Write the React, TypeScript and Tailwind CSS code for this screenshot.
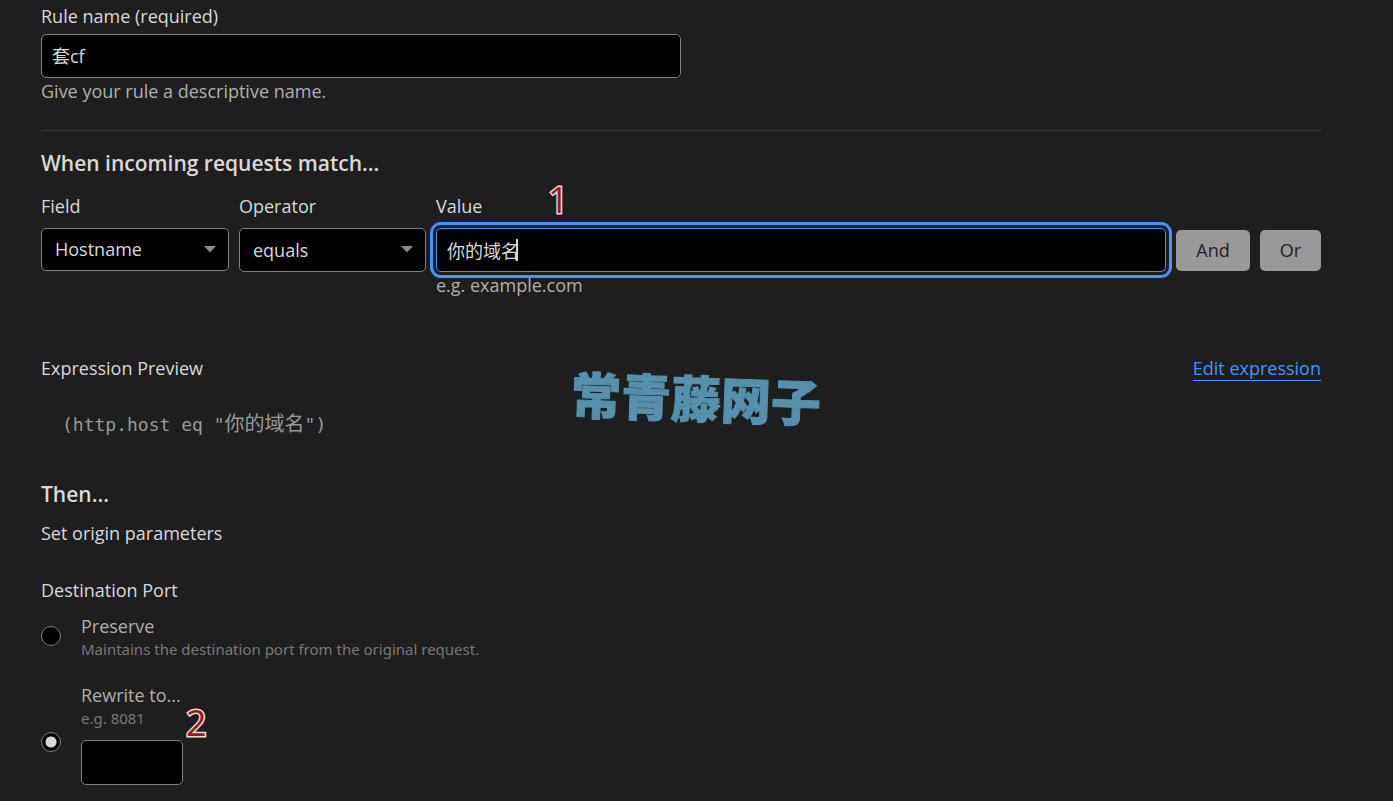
import type { ReactNode } from "react";

function Caret({ className }: { className: string }) {
    return (
        <svg
            className={`pointer-events-none absolute top-[18px] h-[7px] w-3 text-[#8c8c8c] ${className}`}
            viewBox="0 0 12 7"
            aria-hidden="true"
        >
            <path d="M0 0h12L6 6.5z" fill="currentColor" />
        </svg>
    );
}

type SelectFieldProps = {
    id: string;
    label: string;
    options: string[];
    width: string;
    className: string;
};

function SelectField({ id, label, options, width, className }: SelectFieldProps) {
    return (
        <div className={`shrink-0 ${width}`}>
            <label htmlFor={id} className="block leading-6">
                {label}
            </label>
            <div className="relative mt-[10px]">
                <select
                    id={id}
                    className={`block w-full appearance-none rounded-[5px] border border-[#7f8184] bg-black pl-[13px] text-[#d9d9d9] ${className}`}
                >
                    {options.map((option) => (
                        <option key={option}>{option}</option>
                    ))}
                </select>
                <Caret className="right-[13px]" />
            </div>
        </div>
    );
}

function Marker({ children, className }: { children: ReactNode; className: string }) {
    return (
        <span
            className={`pointer-events-none absolute text-4xl leading-9 text-[#981b1b] [-webkit-text-stroke:3px_#e6ddd3] [paint-order:stroke] ${className}`}
        >
            {children}
        </span>
    );
}

function Radio({ id, defaultChecked, className }: { id: string; defaultChecked?: boolean; className?: string }) {
    return (
        <input
            id={id}
            type="radio"
            name="destination-port"
            defaultChecked={defaultChecked}
            className={`size-5 shrink-0 appearance-none rounded-full border border-[#7f8184] bg-black checked:bg-[radial-gradient(circle,#d9d9d9_5px,#000_6px)] ${className ?? ""}`}
        />
    );
}

export default function App() {
    return (
        <div className="min-h-screen bg-[#1e1e1e] pt-1 pr-[72px] pb-4 pl-[41px] font-['Open_Sans','Noto_Sans_CJK_SC',sans-serif] text-lg text-[#d9d9d9]">
            <form>
                {/* Rule name */}
                <section className="border-b border-[#303c4d] pb-[27px]">
                    <label htmlFor="rule-name" className="block leading-6">
                        Rule name (required)
                    </label>
                    <input
                        id="rule-name"
                        type="text"
                        defaultValue="套cf"
                        className="mt-[6px] block h-11 w-1/2 rounded-[5px] border border-[#7f8184] bg-black px-[10px] pb-[2px]"
                    />
                    <p className="mt-px leading-6 text-[#b0b0b0]">Give your rule a descriptive name.</p>
                </section>

                {/* Match conditions */}
                <section>
                    <h2 className="mt-[18px] text-[21px] leading-7 font-semibold">When incoming requests match...</h2>
                    <div className="mt-[17px] flex gap-[10px]">
                        <SelectField id="field" label="Field" options={["Hostname"]} width="w-[188px]" className="h-[43px] pb-[2px]" />
                        <SelectField id="operator" label="Operator" options={["equals"]} width="w-[187px]" className="h-11" />
                        <div className="relative min-w-0 flex-1">
                            <label htmlFor="value" className="block leading-6">
                                Value
                            </label>
                            <Marker className="-top-3 left-28">1</Marker>
                            <div className="relative mt-[10px]">
                                <input
                                    id="value"
                                    type="text"
                                    defaultValue="你的域名"
                                    className="block h-11 w-full rounded-[5px] border border-[#4693ff] bg-black px-[10px] outline-3 outline-offset-3 outline-[#4693ff]"
                                />
                                <span className="pointer-events-none absolute top-[11px] left-[80px] h-[22px] w-[2px] bg-[#d9d9d9]" />
                            </div>
                            <p className="mt-px leading-6 text-[#b0b0b0]">e.g. example.com</p>
                        </div>
                        <div className="mt-9 flex items-start gap-[10px]">
                            <button type="button" className="h-[41px] w-[74px] rounded-[5px] bg-[#999] pb-px text-[#1e1e1e]">
                                And
                            </button>
                            <button type="button" className="h-[41px] w-[61px] rounded-[5px] bg-[#999] pb-px text-[#1e1e1e]">
                                Or
                            </button>
                        </div>
                    </div>
                </section>

                {/* Expression preview */}
                <section className="relative mt-[59px]">
                    <div className="flex items-start justify-between leading-6">
                        <p>Expression Preview</p>
                        <a href="#edit" className="border-b border-[#4693ff] text-[#4693ff]">
                            Edit expression
                        </a>
                    </div>
                    <pre className="mt-[31px] pl-[21px] font-['DejaVu_Sans_Mono','Noto_Sans_CJK_SC',monospace] leading-6 text-[#999]">
                        (http.host eq "<span className="text-xl leading-6">你的域名</span>")
                    </pre>
                    <span className="pointer-events-none absolute top-[23px] left-[530px] rotate-2 text-[50px] leading-10 font-black text-[#5590ad] [-webkit-text-stroke:1px_#5590ad]">
                        常青藤网子
                    </span>
                </section>

                {/* Origin parameters */}
                <section className="mt-[43px]">
                    <h2 className="text-[21px] leading-7 font-semibold">Then...</h2>
                    <p className="mt-[13px] leading-6">Set origin parameters</p>
                    <fieldset className="mt-[33px]">
                        <legend className="leading-6">Destination Port</legend>
                        <div className="mt-3 flex items-center gap-5">
                            <Radio id="preserve" className="mb-[2px]" />
                            <label htmlFor="preserve" className="text-[#b0b0b0]">
                                <span className="block leading-6">Preserve</span>
                                <span className="block font-['Noto_Sans',sans-serif] text-[15px] leading-[22px] text-[#797979]">
                                    Maintains the destination port from the original request.
                                </span>
                            </label>
                        </div>
                        <div className="mt-[23px] flex items-center gap-5">
                            <Radio id="rewrite" defaultChecked className="mt-4" />
                            <div className="relative text-[#b0b0b0]">
                                <label htmlFor="rewrite" className="block leading-6">
                                    Rewrite to...
                                </label>
                                <label
                                    htmlFor="port"
                                    className="block font-['Noto_Sans',sans-serif] text-[15px] leading-[22px] text-[#797979]"
                                >
                                    e.g. 8081
                                </label>
                                <input
                                    id="port"
                                    type="text"
                                    className="mt-[11px] block h-[45px] w-[102px] rounded-[5px] border border-[#7f8184] bg-black px-[10px]"
                                />
                                <Marker className="top-[22px] left-[105px]">2</Marker>
                            </div>
                        </div>
                    </fieldset>
                </section>
            </form>
        </div>
    );
}
